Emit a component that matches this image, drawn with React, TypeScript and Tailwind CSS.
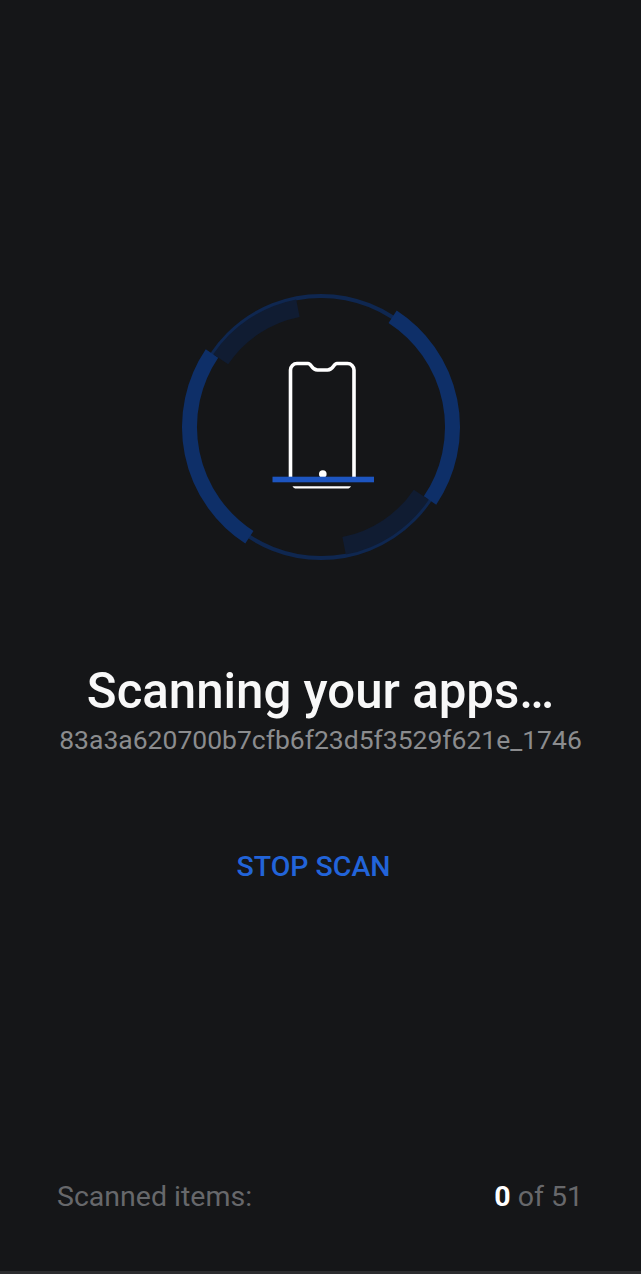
import React from "react";

// Polar point on the scanner dial, angle measured clockwise from twelve o'clock.
function point(r: number, deg: number) {
  const a = ((deg - 90) * Math.PI) / 180;
  return `${(140 + r * Math.cos(a)).toFixed(2)} ${(140 + r * Math.sin(a)).toFixed(2)}`;
}

function arc(r: number, from: number, to: number) {
  const large = to - from > 180 ? 1 : 0;
  return `M${point(r, from)}A${r} ${r} 0 ${large} 1 ${point(r, to)}`;
}

function ScanDial() {
  return (
    <svg width="280" height="280" viewBox="0 0 280 280" fill="none" className="block">
      <circle cx="140" cy="140" r="131" stroke="#0f2750" strokeWidth="4" />
      <path d={arc(131.5, 33, 124)} stroke="#0e2f68" strokeWidth="15" />
      <path d={arc(131.5, 213, 304)} stroke="#0e2f68" strokeWidth="15" />
      <path d={arc(121, 124, 169)} stroke="#101c32" strokeWidth="18" />
      <path d={arc(121, 304, 349)} stroke="#101c32" strokeWidth="18" />
      {/* handset outline with a notch */}
      <path
        d="M109.500 191V83a6.500 6.500 0 0 1 6.500-6.500h11c4 0 3 6.500 9.500 6.500h10c6.500 0 5.500-6.500 9.500-6.500h10.500a6.500 6.500 0 0 1 6.500 6.500v108"
        stroke="#ffffff"
        strokeWidth="3.600"
      />
      <circle cx="141.800" cy="187" r="3.800" fill="#ffffff" />
      <path d="M111.500 199.200h58.500c-.8 1.500-2 2.300-4 2.300h-50.500c-2 0-3.200-.8-4-2.300z" fill="#ffffff" />
      <rect x="91.500" y="189.700" width="101.500" height="5.600" fill="#1d55c0" />
    </svg>
  );
}

export default function App() {
  return (
    <div className="flex h-[1274px] w-full flex-col items-center border-b-[3px] border-[#2b2c2e] bg-[#151618] font-['Roboto',sans-serif]">
      <div className="mt-[287px] flex w-full justify-center">
        <ScanDial />
      </div>
      <h1 className="mt-[96px] text-[49.200px] leading-[56px] font-medium text-[#f8f8f8]">Scanning your apps…</h1>
      <p className="mt-[5px] text-[26.5px] leading-[32px] text-[#8b8c8e]">
        83a3a620700b7cfb6f23d5f3529f621e_1746
      </p>
      <button className="mt-[95px] -translate-x-[7px] text-[28.500px] leading-[32px] font-medium text-[#2264d9]">STOP SCAN</button>
      <div className="mt-auto mb-[58px] flex w-full items-center justify-between pr-[58px] pl-[57px] text-[28.500px] leading-[32px] text-[#67686b]">
        <span>Scanned items:</span>
        <span>
          <b className="font-bold text-white">0</b> of 51
        </span>
      </div>
    </div>
  );
}
